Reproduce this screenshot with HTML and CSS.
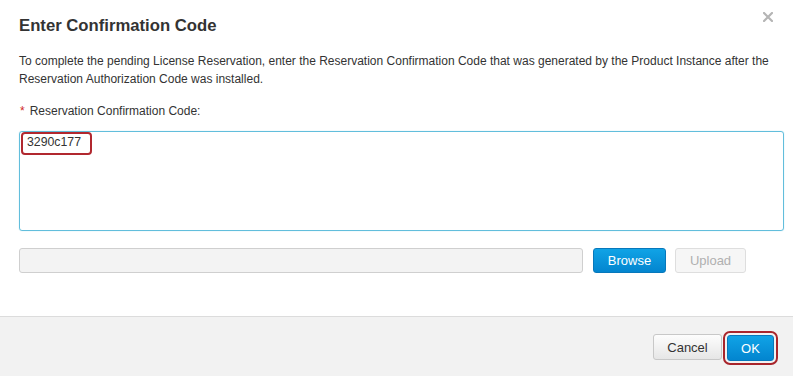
FILE: index.html
```html
<!DOCTYPE html>
<html lang="en">
<head>
    <meta charset="UTF-8">
    <meta name="viewport" content="width=device-width, initial-scale=1.0">
    <title>Enter Confirmation Code</title>
    <link rel="stylesheet" href="styles.css">
</head>
<body>

    <div class="modal">
        <div class="modal-header">
            <h1>Enter Confirmation Code</h1>
            <span class="close" title="Close">
                <svg width="10" height="10" viewBox="0 0 10 10">
                    <path d="M1 1 L9 9 M9 1 L1 9" stroke="#b5b5b5" stroke-width="2.2" stroke-linecap="square"/>
                </svg>
            </span>
        </div>

        <div class="modal-body">
            <p class="intro">To complete the pending License Reservation, enter the Reservation Confirmation Code that was generated by the Product Instance after the Reservation Authorization Code was installed.</p>

            <label class="field-label"><span class="req">*</span>Reservation Confirmation Code:</label>
            <div class="code-box">
                <span class="code-mark">3290c177</span>
            </div>

            <div class="file-row">
                <div class="file-name"></div>
                <button class="btn btn-primary browse">Browse</button>
                <button class="btn btn-disabled upload" disabled>Upload</button>
            </div>
        </div>

        <div class="modal-footer">
            <button class="btn btn-default cancel">Cancel</button>
            <button class="btn btn-primary ok">OK</button>
        </div>
    </div>

</body>
</html>
```

FILE: styles.css
```css
body {
    font-family: "Liberation Sans", Arial, sans-serif;
    background-color: #fff;
    color: #333;
    margin: 0;
    padding: 0;
}
.modal {
    width: 793px;
    height: 376px;
    display: flex;
    flex-direction: column;
    background-color: #fff;
}
.modal-header {
    display: flex;
    justify-content: space-between;
    align-items: flex-start;
    padding: 15px 20px 0 19px;
}
.modal-header h1 {
    margin: 0;
    font-size: 16.7px;
    line-height: 22px;
    font-weight: bold;
    color: #333;
}
.close {
    display: block;
    margin-top: -3px;
    width: 10px;
    height: 10px;
}
.close svg {
    display: block;
}
.modal-body {
    padding: 15px 9px 43px 19px;
}
.intro {
    margin: 0;
    font-size: 12px;
    line-height: 18px;
}
.field-label {
    display: block;
    margin-top: 14px;
    font-size: 12px;
    line-height: 18px;
}
.req {
    color: #d0271d;
    margin-right: 5px;
    margin-left: 1px;
}
.code-box {
    margin-top: 11px;
    height: 98px;
    border: 1px solid #62bedc;
    border-radius: 3px;
    box-shadow: 0 0 1px #8fd0e6;
    padding: 0 1px;
}
.code-mark {
    display: inline-block;
    font-size: 12.3px;
    line-height: 15px;
    padding: 1px 6px 3px 4px;
    border: 2px solid #b1282f;
    border-radius: 4px;
    width: 57px;
}
.file-row {
    display: flex;
    align-items: center;
    margin-top: 17px;
}
.file-name {
    width: 562px;
    height: 23px;
    background-color: #f3f3f3;
    border: 1px solid #cfcfcf;
    border-radius: 3px;
    margin-right: 10px;
}
.btn {
    font-family: "Liberation Sans", Arial, sans-serif;
    font-size: 13px;
    height: 25px;
    border-radius: 3px;
    padding: 0;
    cursor: pointer;
}
.btn-primary {
    color: #fff;
    background: linear-gradient(#10a3e6, #0385cf);
    border: 1px solid #0778bb;
}
.btn-default {
    color: #333;
    background: linear-gradient(#fdfdfd, #e6e6e6);
    border: 1px solid #c8c8c8;
}
.btn-disabled {
    color: #b0b0b0;
    background-color: #f6f6f6;
    border: 1px solid #dedede;
    cursor: default;
}
.browse {
    width: 73px;
    margin-right: 9px;
}
.upload {
    width: 71px;
}
.modal-footer {
    flex: 1;
    display: flex;
    justify-content: flex-end;
    align-items: flex-start;
    padding: 17px 19px 0 0;
    background-color: #f2f2f2;
    border-top: 1px solid #dcdcdc;
}
.cancel {
    width: 69px;
    height: 26px;
    margin-right: 5px;
}
.ok {
    width: 47px;
    height: 26px;
    margin-top: 1px;
    outline: 2px solid #a8252c;
    outline-offset: 2px;
}
```
